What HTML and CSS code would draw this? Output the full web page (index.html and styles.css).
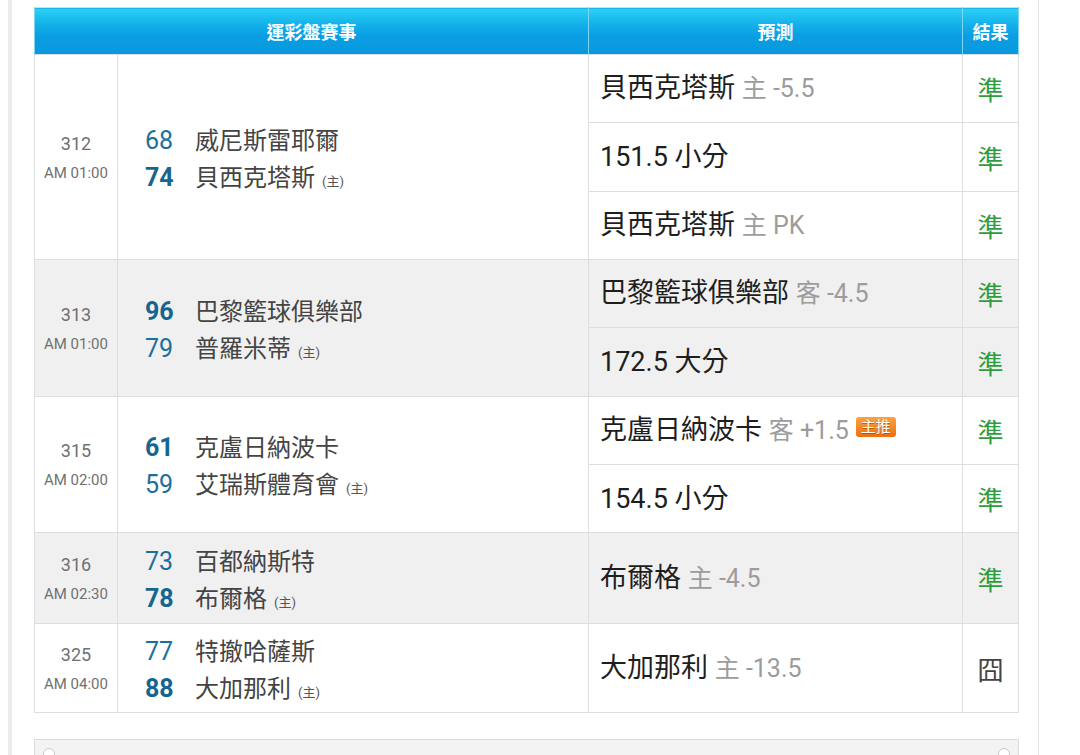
FILE: index.html
```html
<!DOCTYPE html>
<html lang="zh-Hant">
<head>
<meta charset="utf-8">
<title>運彩盤賽事</title>
<link rel="stylesheet" href="styles.css">
</head>
<body>
<div class="page">
  <table class="tbl">
    <colgroup><col class="c1"><col class="c2"><col class="c3"><col class="c4"></colgroup>
    <thead>
      <tr><th colspan="2">運彩盤賽事</th><th>預測</th><th>結果</th></tr>
    </thead>
    <tbody>
      <tr class="r68">
        <td rowspan="3" class="num"><div class="no">312</div><div class="tm">AM 01:00</div></td>
        <td rowspan="3" class="teams">
          <div class="team"><span class="sc">68</span><span class="nm">威尼斯雷耶爾</span></div>
          <div class="team"><span class="sc b">74</span><span class="nm">貝西克塔斯</span><span class="home">(主)</span></div>
        </td>
        <td class="pred">貝西克塔斯 <span class="g">主 -5.5</span></td>
        <td class="res ok">準</td>
      </tr>
      <tr class="r69"><td class="pred">151.5 小分</td><td class="res ok">準</td></tr>
      <tr class="r68"><td class="pred">貝西克塔斯 <span class="g">主 PK</span></td><td class="res ok">準</td></tr>
    </tbody>
    <tbody class="alt">
      <tr class="r68">
        <td rowspan="2" class="num"><div class="no">313</div><div class="tm">AM 01:00</div></td>
        <td rowspan="2" class="teams">
          <div class="team"><span class="sc b">96</span><span class="nm">巴黎籃球俱樂部</span></div>
          <div class="team"><span class="sc">79</span><span class="nm">普羅米蒂</span><span class="home">(主)</span></div>
        </td>
        <td class="pred">巴黎籃球俱樂部 <span class="g">客 -4.5</span></td>
        <td class="res ok">準</td>
      </tr>
      <tr class="r69"><td class="pred">172.5 大分</td><td class="res ok">準</td></tr>
    </tbody>
    <tbody>
      <tr class="r68">
        <td rowspan="2" class="num"><div class="no">315</div><div class="tm">AM 02:00</div></td>
        <td rowspan="2" class="teams">
          <div class="team"><span class="sc b">61</span><span class="nm">克盧日納波卡</span></div>
          <div class="team"><span class="sc">59</span><span class="nm">艾瑞斯體育會</span><span class="home">(主)</span></div>
        </td>
        <td class="pred">克盧日納波卡 <span class="g">客 +1.5</span><span class="badge">主推</span></td>
        <td class="res ok">準</td>
      </tr>
      <tr class="r68"><td class="pred">154.5 小分</td><td class="res ok">準</td></tr>
    </tbody>
    <tbody class="alt">
      <tr class="r91">
        <td class="num"><div class="no">316</div><div class="tm">AM 02:30</div></td>
        <td class="teams">
          <div class="team"><span class="sc">73</span><span class="nm">百都納斯特</span></div>
          <div class="team"><span class="sc b">78</span><span class="nm">布爾格</span><span class="home">(主)</span></div>
        </td>
        <td class="pred">布爾格 <span class="g">主 -4.5</span></td>
        <td class="res ok">準</td>
      </tr>
    </tbody>
    <tbody>
      <tr class="r89">
        <td class="num"><div class="no">325</div><div class="tm">AM 04:00</div></td>
        <td class="teams">
          <div class="team"><span class="sc">77</span><span class="nm">特撤哈薩斯</span></div>
          <div class="team"><span class="sc b">88</span><span class="nm">大加那利</span><span class="home">(主)</span></div>
        </td>
        <td class="pred">大加那利 <span class="g">主 -13.5</span></td>
        <td class="res bad">囧</td>
      </tr>
    </tbody>
  </table>
  <div class="bottom"><span class="dot"></span><span class="dot"></span></div>
</div>
</body>
</html>
```

FILE: styles.css
```css
html, body {
  margin: 0;
  padding: 0;
  background: #ffffff;
  height: 755px;
  overflow: hidden;
}
body {
  font-family: Roboto, "Noto Sans CJK TC", "Noto Sans", sans-serif;
}
.page {
  margin-left: 8px;
  width: 1031px;
  height: 755px;
  border-left: 4px solid #ececec;
  border-right: 1px solid #e2e2e2;
  padding: 7px 24px 0 22px;
  box-sizing: border-box;
  background: #fff;
}
.tbl {
  width: 985px;
  border-collapse: collapse;
  table-layout: fixed;
  border: 1px solid #dcdcdc;
}
.c1 { width: 83px; }
.c2 { width: 471px; }
.c3 { width: 374px; }
.c4 { width: 56px; }
.tbl th {
  height: 46px;
  padding: 0;
  color: #fff;
  font-size: 18px;
  font-weight: 700;
  background: linear-gradient(#2bd3f4 0%, #13b0ea 35%, #0a9ee2 60%, #0a98dd 100%);
  border-left: 1px solid #7fd6f3;
  border-right: 1px solid #7fd6f3;
  text-align: center;
  vertical-align: middle;
}
.tbl td {
  padding: 0;
  border: 1px solid #dedede;
  vertical-align: middle;
}
.alt td { background: #f0f0f0; }
.r68 { height: 68px; }
.r69 { height: 69px; }
.r91 { height: 91px; }
.r89 { height: 89px; }
.num {
  text-align: center;
  color: #707070;
  padding-top: 2px !important;
}
.no { font-size: 18px; line-height: 29px; }
.tm { font-size: 15px; line-height: 30px; }
.teams { padding-left: 27px !important; padding-top: 3px !important; }
.team {
  display: flex;
  align-items: baseline;
  height: 37px;
  line-height: 37px;
}
.sc {
  width: 50px;
  font-size: 25px;
  color: #1b6f9d;
}
.sc.b { font-weight: 700; color: #16658f; }
.nm {
  font-size: 24px;
  color: #444;
}
.home {
  font-size: 13px;
  color: #555;
  margin-left: 7px;
}
.pred {
  padding-left: 11px !important;
  font-size: 27px;
  line-height: 32px;
  color: #1e1e1e;
  white-space: nowrap;
}
.g {
  color: #9c9c9c;
  font-size: 25px;
}
.badge {
  display: inline-block;
  vertical-align: 7px;
  margin-left: 7px;
  width: 40px;
  height: 20px;
  line-height: 20px;
  border-radius: 3px;
  background: linear-gradient(#f9a443, #ec6e10);
  color: #fff;
  font-size: 15px;
  text-align: center;
  text-shadow: 0 1px 0 rgba(120, 50, 0, 0.5);
}
.res {
  text-align: center;
  font-size: 26px;
}
.ok { color: #2f9d3e; }
.bad { color: #444; }
.bottom {
  margin-top: 26px;
  width: 985px;
  height: 40px;
  box-sizing: border-box;
  border: 1px solid #dcdcdc;
  background: #f3f3f3;
  display: flex;
  justify-content: space-between;
  padding: 8px 8px 0 8px;
}
.dot {
  width: 10px;
  height: 10px;
  border: 1px solid #c8c8c8;
  border-radius: 50%;
  background: #fff;
}
```
